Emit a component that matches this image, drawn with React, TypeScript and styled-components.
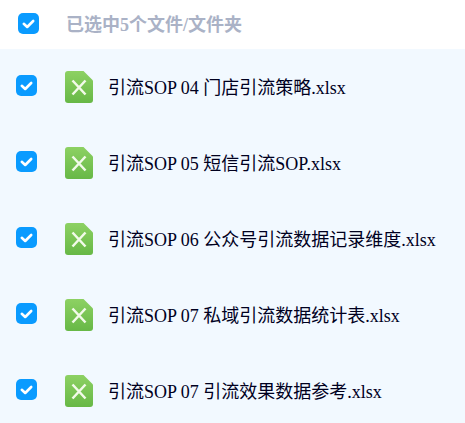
import React from 'react'
import styled, { createGlobalStyle } from 'styled-components'

const GlobalStyle = createGlobalStyle`
    html, body {
        margin: 0;
        padding: 0;
        height: 100%;
        overflow: hidden;
        background: #fff;
    }
    body {
        font-family: "Liberation Serif", "Noto Sans CJK SC", serif;
    }
`

const Page = styled.div`
    width: 465px;
    height: 423px;
    overflow: hidden;
`

const Header = styled.div`
    display: flex;
    align-items: center;
    box-sizing: border-box;
    height: 49px;
    padding: 0 0 2px 18px;
    background: #fff;
`

const HeaderLabel = styled.span`
    margin: 0 0 2px 27px;
    font-size: 18px;
    font-weight: 700;
    color: #aab2c6;
`

const List = styled.div`
    background: #f2f9ff;
`

const Row = styled.div`
    display: flex;
    align-items: center;
    height: 76px;
    padding-left: 16px;
`

const FileName = styled.span`
    margin: 0 0 2px 15px;
    font-size: 18px;
    color: #00001e;
    white-space: nowrap;
`

const CheckBox = styled.svg<{ $inRow?: boolean }>`
    display: block;
    flex: none;
    width: 21px;
    height: 21px;
    margin-bottom: ${({ $inRow }) => ($inRow ? '3px' : '0')};
`

const FileGlyph = styled.svg`
    display: block;
    flex: none;
    margin-left: 28px;
    width: 28px;
    height: 32px;
`

function Check({ inRow }: { inRow?: boolean }) {
    return (
        <CheckBox $inRow={inRow} viewBox="0 0 21 21">
            <rect width="21" height="21" rx="5" fill="#0a9bff" />
            <path d="M5.8 10.8l3.4 3.2 6-6" fill="none" stroke="#fff" strokeWidth="2.6" strokeLinecap="round" strokeLinejoin="round" />
        </CheckBox>
    )
}

function ExcelIcon({ id }: { id: string }) {
    return (
        <FileGlyph viewBox="0 0 28 32">
            <defs>
                <linearGradient id={id} x1="0" y1="0" x2="0" y2="1">
                    <stop offset="0" stopColor="#8dd163" />
                    <stop offset="1" stopColor="#67b846" />
                </linearGradient>
            </defs>
            <path d="M3 0h15.5L28 9.5V29a3 3 0 0 1-3 3H3a3 3 0 0 1-3-3V3a3 3 0 0 1 3-3z" fill={`url(#${id})`} />
            <path d="M7.5 9.5l13 14M20.5 9.5l-13 14" fill="none" stroke="#f2fae9" strokeWidth="2.5" />
        </FileGlyph>
    )
}

const files = [
    '引流SOP 04 门店引流策略.xlsx',
    '引流SOP 05 短信引流SOP.xlsx',
    '引流SOP 06 公众号引流数据记录维度.xlsx',
    '引流SOP 07 私域引流数据统计表.xlsx',
    '引流SOP 07 引流效果数据参考.xlsx'
]

export default function App() {
    return (
        <Page>
            <GlobalStyle />
            <Header>
                <Check />
                <HeaderLabel>已选中5个文件/文件夹</HeaderLabel>
            </Header>
            <List>
                {files.map((name, i) => (
                    <Row key={name}>
                        <Check inRow />
                        <ExcelIcon id={`xls-${i}`} />
                        <FileName>{name}</FileName>
                    </Row>
                ))}
            </List>
        </Page>
    )
}
